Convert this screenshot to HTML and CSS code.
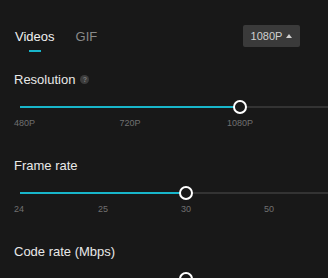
FILE: index.html
```html
<!DOCTYPE html>
<html lang="en">
<head>
    <meta charset="UTF-8">
    <meta name="viewport" content="width=device-width, initial-scale=1.0">
    <title>Export settings</title>
    <link rel="stylesheet" href="styles.css">
</head>
<body>
    <div class="panel">
        <div class="header">
            <div class="tabs">
                <div class="tab active">Videos</div>
                <div class="tab">GIF</div>
            </div>
            <button class="quality">1080P <span class="caret"></span></button>
        </div>

        <section class="setting">
            <div class="setting-title">Resolution <span class="help">?</span></div>
            <div class="slider">
                <div class="track"><div class="fill" style="width: 66.27%"></div></div>
                <div class="thumb" style="left: 66.27%"></div>
            </div>
            <div class="ticks">
                <span class="tick first">480P</span>
                <span class="tick" style="left: 33.13%">720P</span>
                <span class="tick" style="left: 66.27%">1080P</span>
            </div>
        </section>

        <section class="setting">
            <div class="setting-title">Frame rate</div>
            <div class="slider">
                <div class="track"><div class="fill" style="width: 50%"></div></div>
                <div class="thumb" style="left: 50%"></div>
            </div>
            <div class="ticks">
                <span class="tick first">24</span>
                <span class="tick" style="left: 25%">25</span>
                <span class="tick" style="left: 50%">30</span>
                <span class="tick" style="left: 75%">50</span>
            </div>
        </section>

        <section class="setting">
            <div class="setting-title">Code rate (Mbps)</div>
            <div class="slider">
                <div class="track"><div class="fill" style="width: 50%"></div></div>
                <div class="thumb" style="left: 50%"></div>
            </div>
        </section>
    </div>
</body>
</html>
```

FILE: styles.css
```css
* {
    margin: 0;
    padding: 0;
    box-sizing: border-box;
}

body {
    font-family: "Liberation Sans", Arial, sans-serif;
    background: #181818;
    width: 328px;
    height: 278px;
    overflow: hidden;
}

.panel {
    width: 328px;
}

.header {
    display: flex;
    justify-content: space-between;
    align-items: flex-start;
    height: 52px;
    padding: 25px 28px 0 15px;
}

.tabs {
    display: flex;
    gap: 21px;
    margin-top: 4px;
}

.tab {
    display: flex;
    flex-direction: column;
    align-items: center;
    font-size: 13px;
    line-height: 15px;
    color: #8a8a8a;
}

.tab.active {
    color: #f0f0f0;
}

.tab.active::after {
    content: '';
    width: 12px;
    height: 2px;
    margin-top: 6px;
    background: #18b5ca;
}

.quality {
    display: flex;
    align-items: center;
    justify-content: center;
    gap: 4px;
    width: 57px;
    height: 22px;
    border: none;
    border-radius: 2px;
    background: #3a3a3a;
    color: #d0d0d0;
    font-family: inherit;
    font-size: 11px;
}

.caret {
    width: 0;
    height: 0;
    border-left: 3px solid transparent;
    border-right: 3px solid transparent;
    border-bottom: 4px solid #d0d0d0;
}

.setting {
    margin-top: 29px;
    padding-left: 14px;
}

.header + .setting {
    margin-top: 20px;
}

.setting-title {
    display: flex;
    align-items: center;
    gap: 5px;
    font-size: 13px;
    line-height: 15px;
    color: #e8e8e8;
}

.help {
    display: flex;
    align-items: center;
    justify-content: center;
    width: 9px;
    height: 9px;
    border-radius: 50%;
    background: #3c3c3c;
    color: #7a7a7a;
    font-size: 7px;
    line-height: 9px;
    font-weight: bold;
}

.slider {
    position: relative;
    width: 332px;
    height: 20px;
    margin: 10px 0 0 6px;
}

.track {
    position: absolute;
    left: 0;
    right: 0;
    top: 9px;
    height: 2px;
    background: #333333;
}

.fill {
    height: 100%;
    background: #18b5ca;
}

.thumb {
    position: absolute;
    top: 3px;
    width: 14px;
    height: 14px;
    margin-left: -7px;
    border: 2px solid #ffffff;
    border-radius: 50%;
    background: #181818;
}

.ticks {
    position: relative;
    width: 332px;
    height: 12px;
    margin: 0 0 0 6px;
    font-size: 9px;
    line-height: 12px;
    color: #707070;
}

.tick {
    position: absolute;
    top: 0;
    transform: translateX(-50%);
    white-space: nowrap;
}

.tick.first {
    left: -6px;
    transform: none;
}
```
